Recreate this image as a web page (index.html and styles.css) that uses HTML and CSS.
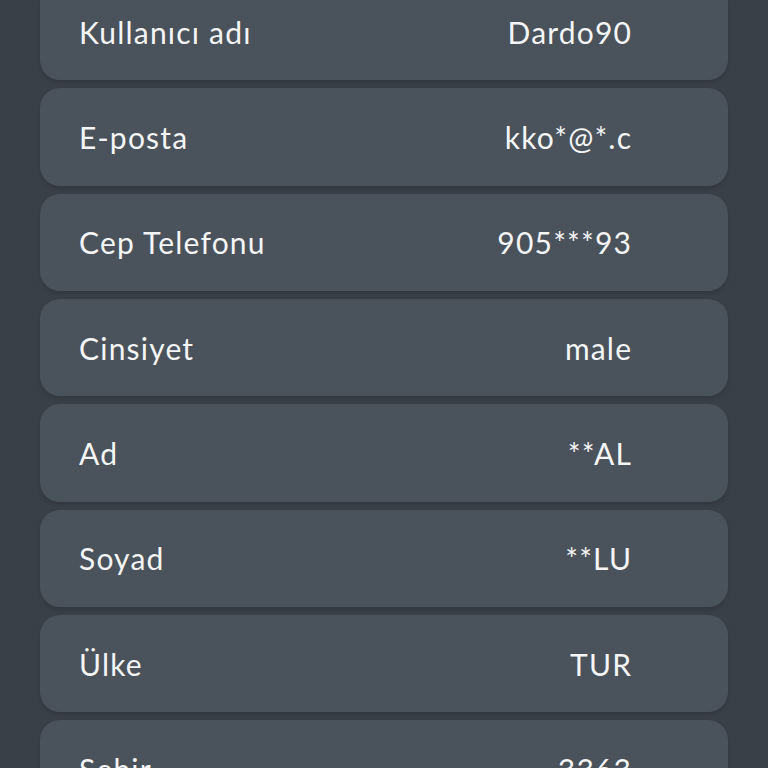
FILE: index.html
```html
<!DOCTYPE html>
<html lang="tr">
<head>
<meta charset="utf-8">
<link rel="stylesheet" href="styles.css">
<title>Profil</title>
</head>
<body>
<div class="list">
  <div class="row"><span class="label">Kullanıcı adı</span><span class="value">Dardo90</span></div>
  <div class="row"><span class="label">E-posta</span><span class="value">kko*@*.c</span></div>
  <div class="row"><span class="label">Cep Telefonu</span><span class="value">905***93</span></div>
  <div class="row"><span class="label">Cinsiyet</span><span class="value">male</span></div>
  <div class="row"><span class="label">Ad</span><span class="value">**AL</span></div>
  <div class="row"><span class="label">Soyad</span><span class="value">**LU</span></div>
  <div class="row"><span class="label">Ülke</span><span class="value">TUR</span></div>
  <div class="row"><span class="label">Şehir</span><span class="value">3363</span></div>
</div>
</body>
</html>
```
FILE: styles.css
```css
html, body {
  margin: 0;
  padding: 0;
  background: #3a4048;
  height: 768px;
  overflow: hidden;
}
body {
  font-family: "Lato", "Noto Sans", sans-serif;
  color: #f4f5f6;
}
.list {
  display: flex;
  flex-direction: column;
  gap: 8px;
  margin: -17px 40px 0 40px;
}
.row {
  height: 97.33px;
  box-sizing: border-box;
  background: #4a525b;
  border-radius: 20px;
  box-shadow: 0 3px 4px rgba(0, 0, 0, 0.12);
  display: flex;
  align-items: center;
  justify-content: space-between;
  padding: 0 97px 0 39px;
  font-size: 30px;
  letter-spacing: 1.2px;
}
.value {
  margin-right: -1.2px;
}
```
